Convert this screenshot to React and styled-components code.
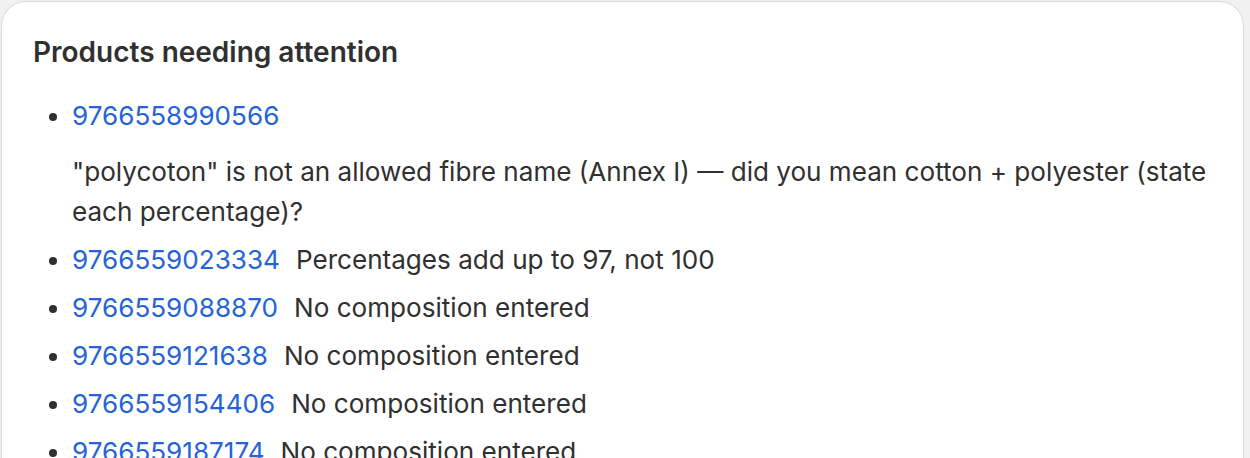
import React from "react";
import styled, { createGlobalStyle } from "styled-components";

const Global = createGlobalStyle`
  html, body { margin: 0; padding: 0; background: #f1f1f1; }
  body { font-family: Inter, "Noto Sans", sans-serif; color: #303030; -webkit-font-smoothing: antialiased; }
  #root { padding: 2px 7px 0 2px; }
`;

const Card = styled.section`
  background: #ffffff;
  border-radius: 24px;
  box-shadow: 0 0 0 1px rgba(0, 0, 0, 0.09), 0 2px 2px rgba(0, 0, 0, 0.04);
  padding: 30px 32px 32px;
  min-height: 600px;
`;

const Heading = styled.h2`
  margin: 0 0 0 -1px;
  font-size: 28px;
  line-height: 40px;
  font-weight: 600;
  color: #303030;
`;

const List = styled.ul`
  margin: 24px 0 0;
  padding-left: 38px;
  display: flex;
  flex-direction: column;
  gap: 8px;
`;

const Item = styled.li`
  font-size: 26.1px;
  line-height: 40px;
  &::marker { color: #303030; }
`;

const Row = styled.div`
  display: flex;
  flex-wrap: wrap;
  gap: 16px;
`;

const ProductLink = styled.a`
  color: #2463d8;
  text-decoration: none;
`;

const Message = styled.span`
  color: #303030;
`;

const items = [
  { id: "9766558990566", msg: "\"polycoton\" is not an allowed fibre name (Annex I) — did you mean cotton + polyester (state each percentage)?" },
  { id: "9766559023334", msg: "Percentages add up to 97, not 100" },
  { id: "9766559088870", msg: "No composition entered" },
  { id: "9766559121638", msg: "No composition entered" },
  { id: "9766559154406", msg: "No composition entered" },
  { id: "9766559187174", msg: "No composition entered" },
];

export default function App() {
  return (
    <>
      <Global />
      <Card>
        <Heading>Products needing attention</Heading>
        <List>
          {items.map((it) => (
            <Item key={it.id}>
              <Row>
                <ProductLink href="#">{it.id}</ProductLink>
                <Message>{it.msg}</Message>
              </Row>
            </Item>
          ))}
        </List>
      </Card>
    </>
  );
}
